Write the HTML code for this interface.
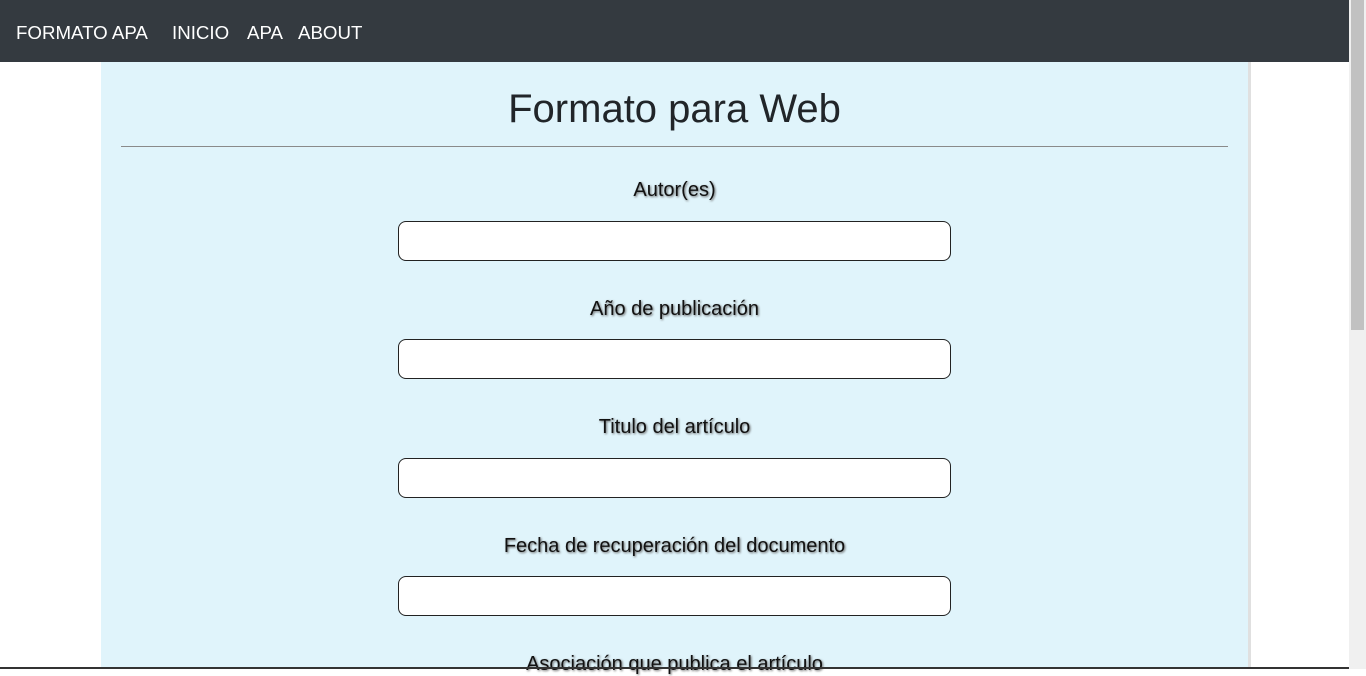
<!DOCTYPE html>
<html><head><meta charset="utf-8"><style>
*{box-sizing:border-box;margin:0;padding:0}
html,body{width:1366px;height:669px;overflow:hidden;background:#fff;font-family:"Liberation Sans",sans-serif}
.nav{position:absolute;left:0;top:0;width:1349px;height:62px;background:#343a40;color:#fff;font-size:18.7px}
.nav span{position:absolute;top:22px;line-height:22px}
.box{position:absolute;left:101px;top:62px;width:1147px;height:607px;background:#e0f4fb;box-shadow:3px 0 0 #e0e0e0}
h1{position:absolute;left:0;width:1147px;top:84px;text-align:center;font-weight:normal;font-size:40px;color:#212529;line-height:50px}
.hr{position:absolute;left:121px;top:146px;width:1107px;height:1px;background:#8a8a8a}
.lab{position:absolute;left:101px;width:1147px;text-align:center;font-size:20px;color:#111;text-shadow:1px 1px 2px #666;line-height:24px}
.inp{position:absolute;left:398px;width:553px;height:40px;background:#fff;border:1px solid #222;border-radius:8px}
.sb{position:absolute;left:1349px;top:0;width:17px;height:669px;background:#f0f0f0}
.th{position:absolute;left:1351px;top:0;width:13px;height:330px;background:#c1c1c1}
.bot{position:absolute;left:0;top:667px;width:1349px;height:2px;background:#333}
</style></head><body>
<div class="nav"><span style="left:16px">FORMATO APA</span><span style="left:172px">INICIO</span><span style="left:247px">APA</span><span style="left:298px">ABOUT</span></div>
<div class="box"></div>
<h1 style="left:101px">Formato para Web</h1>
<div class="hr"></div>
<div class="lab" style="top:178px">Autor(es)</div>
<div class="inp" style="top:221px"></div>
<div class="lab" style="top:297px">Año de publicación</div>
<div class="inp" style="top:339px"></div>
<div class="lab" style="top:415px">Titulo del artículo</div>
<div class="inp" style="top:458px"></div>
<div class="lab" style="top:534px">Fecha de recuperación del documento</div>
<div class="inp" style="top:576px"></div>
<div class="lab" style="top:652px">Asociación que publica el artículo</div>
<div class="bot"></div>
<div class="sb"></div><div class="th"></div>
</body></html>
